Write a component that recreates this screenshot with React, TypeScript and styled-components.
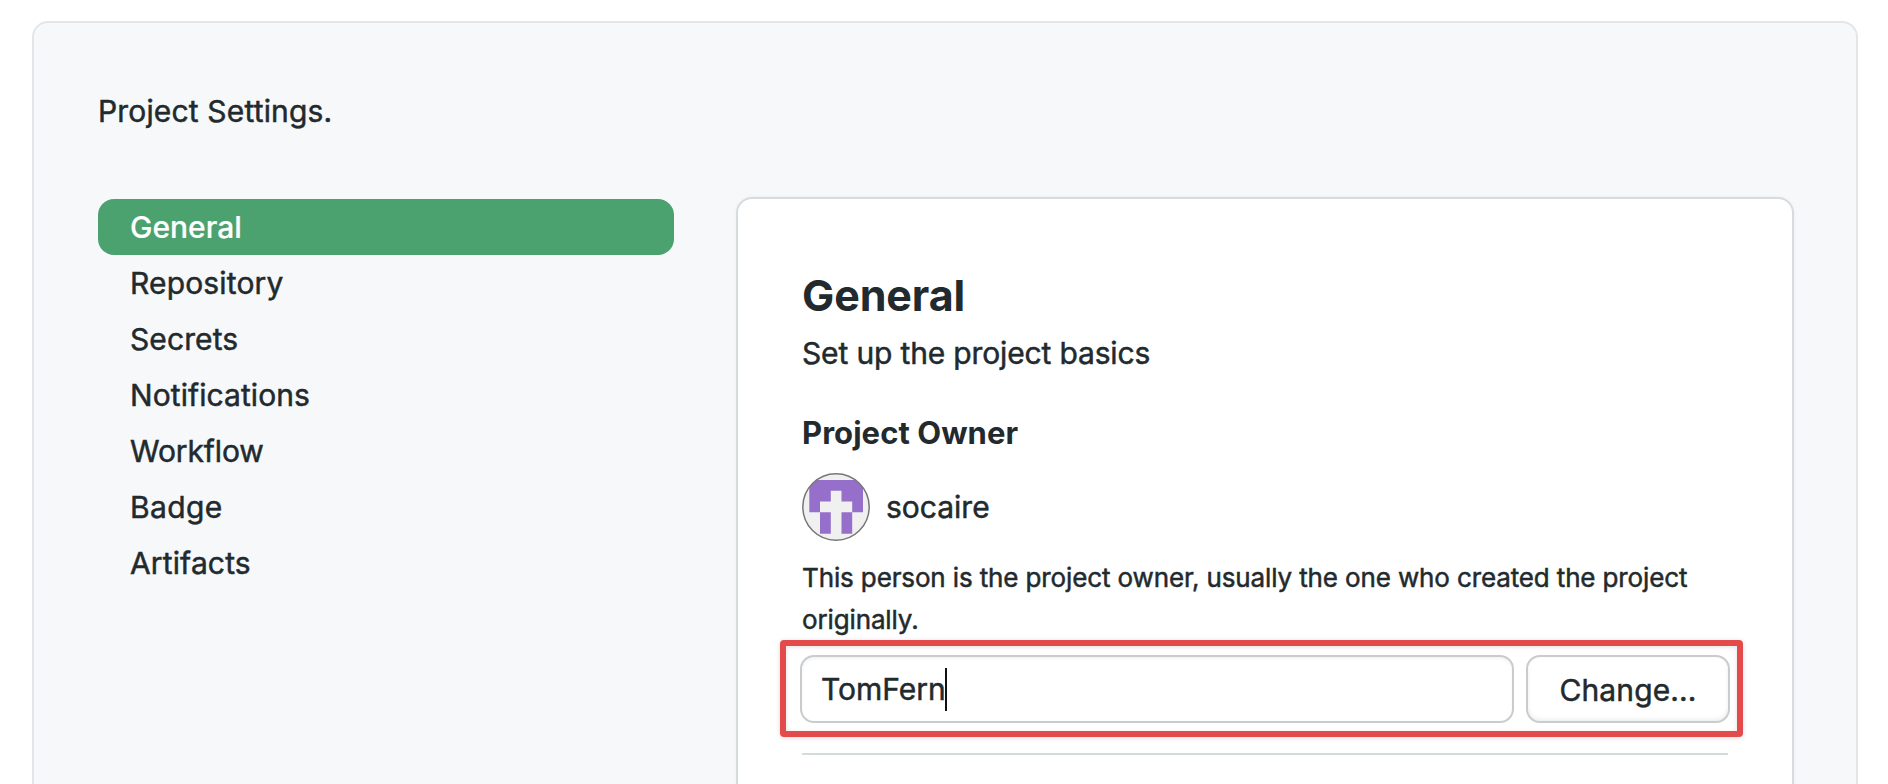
import React from 'react';
import styled, { createGlobalStyle } from 'styled-components';

const GlobalStyle = createGlobalStyle`
  *, *::before, *::after { box-sizing: border-box; }
  body {
    margin: 0;
    background: #fff;
    color: #222a2d;
    font-family: Inter, "Liberation Sans", sans-serif;
    font-size: 30px;
    line-height: 48px;
    -webkit-text-stroke: 0.5px currentColor;
  }
  h1, h2, h3, p, ul { margin: 0; padding: 0; }
`;

const Page = styled.main`
  height: 784px;
  padding: 21px 30px 0 32px;
  overflow: hidden;
`;

const Panel = styled.section`
  height: 840px;
  padding: 64px;
  background: #f7f8fa;
  border: 2px solid #e3e6e8;
  border-radius: 16px;
`;

const PageTitle = styled.h1`
  font-size: 30px;
  font-weight: 400;
  line-height: 48px;
  letter-spacing: 0.16px;
`;

const Columns = styled.div`
  display: grid;
  grid-template-columns: 576px 1fr;
  column-gap: 62px;
  margin-top: 62px;
`;

const Nav = styled.ul`
  padding-top: 2px;
  list-style: none;
`;

const NavItem = styled.li<{ $active?: boolean; $tracking?: number }>`
  height: 56px;
  padding: 0 32px;
  border-radius: 16px;
  line-height: 56px;
  letter-spacing: ${({ $tracking = 0 }) => $tracking}px;
  font-weight: ${({ $active }) => ($active ? 500 : 400)};
  color: ${({ $active }) => ($active ? '#fff' : 'inherit')};
  background: ${({ $active }) => ($active ? '#4ba26f' : 'transparent')};
  -webkit-text-stroke-width: ${({ $active }) => ($active ? '0.2px' : '0.5px')};
`;

const Card = styled.section`
  height: 700px;
  margin-right: -2px;
  padding: 64px;
  background: #fff;
  border: 2px solid #d6dbde;
  border-radius: 16px;
  box-shadow: 0 0 4px rgba(0, 0, 0, 0.04);
`;

const CardTitle = styled.h2`
  font-size: 43px;
  font-weight: 700;
  line-height: 64px;
  letter-spacing: -0.1px;
  -webkit-text-stroke-width: 0;
`;

const Subtitle = styled.p`
  margin-top: 2px;
  letter-spacing: -0.15px;
`;

const SectionTitle = styled.h3`
  margin-top: 32px;
  font-size: 31px;
  font-weight: 700;
  line-height: 48px;
  letter-spacing: 0.06px;
  -webkit-text-stroke-width: 0;
`;

const Owner = styled.div`
  display: flex;
  align-items: center;
  gap: 16px;
  margin-top: 16px;
`;

const Avatar = styled.svg`
  display: block;
  width: 68px;
  height: 68px;
`;

const Hint = styled.p`
  margin-top: 16px;
  font-size: 26px;
  line-height: 42px;
  letter-spacing: -0.13px;
`;

const FieldRow = styled.div`
  position: relative;
  display: flex;
  gap: 12px;
  margin: 14px -2px 0;
`;

const TextField = styled.div`
  display: flex;
  align-items: center;
  flex: 1;
  height: 68px;
  padding-left: 19px;
  background: #fff;
  border: 2px solid #c9cccf;
  border-radius: 14px;
  box-shadow: inset 0 2px 3px rgba(0, 0, 0, 0.05);
`;

const Caret = styled.span`
  width: 2px;
  height: 43px;
  margin-left: -1px;
  background: #111;
`;

const ChangeButton = styled.button`
  width: 204px;
  height: 68px;
  padding: 2px 0 0;
  color: inherit;
  font: inherit;
  letter-spacing: 0.1px;
  text-align: center;
  background: #fff;
  border: 2px solid #c9cccf;
  border-radius: 14px;
  box-shadow: inset 0 -2px 4px rgba(0, 0, 0, 0.07);
`;

const Highlight = styled.div`
  position: absolute;
  top: -15px;
  left: -20.5px;
  width: 963.5px;
  height: 97px;
  border: 6px solid #e34a4c;
  border-radius: 4px;
  box-shadow: 0 1px 5px rgba(90, 30, 30, 0.16), inset 0 1px 5px rgba(90, 30, 30, 0.14);
  pointer-events: none;
`;

const Divider = styled.hr`
  height: 2px;
  margin: 30px 0 0;
  border: 0;
  background: #d5dadd;
`;

const navItems = [
  { label: 'General', active: true, tracking: 0 },
  { label: 'Repository', tracking: 0.16 },
  { label: 'Secrets', tracking: 0.1 },
  { label: 'Notifications', tracking: 0.08 },
  { label: 'Workflow', tracking: -0.1 },
  { label: 'Badge', tracking: 0.4 },
  { label: 'Artifacts', tracking: 0.14 },
];

function OwnerAvatar() {
  return (
    <Avatar viewBox="0 0 68 68" aria-hidden="true">
      <defs>
        <clipPath id="avatar-circle">
          <circle cx="34" cy="34" r="33.3" />
        </clipPath>
      </defs>
      <g clipPath="url(#avatar-circle)">
        <rect width="68" height="68" fill="#f0f0f0" />
        <path
          fill="#956fca"
          d="M7.3 7H61v32.2H50.2V28.5H39.5V17.8H28.8v10.7H18v10.7H7.3zM18 39.2h10.8v21.5H18zM39.5 39.2h10.7v21.5H39.5z"
        />
      </g>
      <circle cx="34" cy="34" r="33.2" fill="none" stroke="#777" strokeWidth="1.5" />
    </Avatar>
  );
}

export default function App() {
  return (
    <>
      <GlobalStyle />
      <Page>
        <Panel>
          <PageTitle>Project Settings.</PageTitle>
          <Columns>
            <Nav>
              {navItems.map(({ label, active, tracking }) => (
                <NavItem key={label} $active={active} $tracking={tracking}>
                  {label}
                </NavItem>
              ))}
            </Nav>
            <Card>
              <CardTitle>General</CardTitle>
              <Subtitle>Set up the project basics</Subtitle>
              <SectionTitle>Project Owner</SectionTitle>
              <Owner>
                <OwnerAvatar />
                <span>socaire</span>
              </Owner>
              <Hint>
                This person is the project owner, usually the one who created the project originally.
              </Hint>
              <FieldRow>
                <TextField>
                  <span>TomFern</span>
                  <Caret />
                </TextField>
                <ChangeButton type="button">Change...</ChangeButton>
                <Highlight />
              </FieldRow>
              <Divider />
            </Card>
          </Columns>
        </Panel>
      </Page>
    </>
  );
}
